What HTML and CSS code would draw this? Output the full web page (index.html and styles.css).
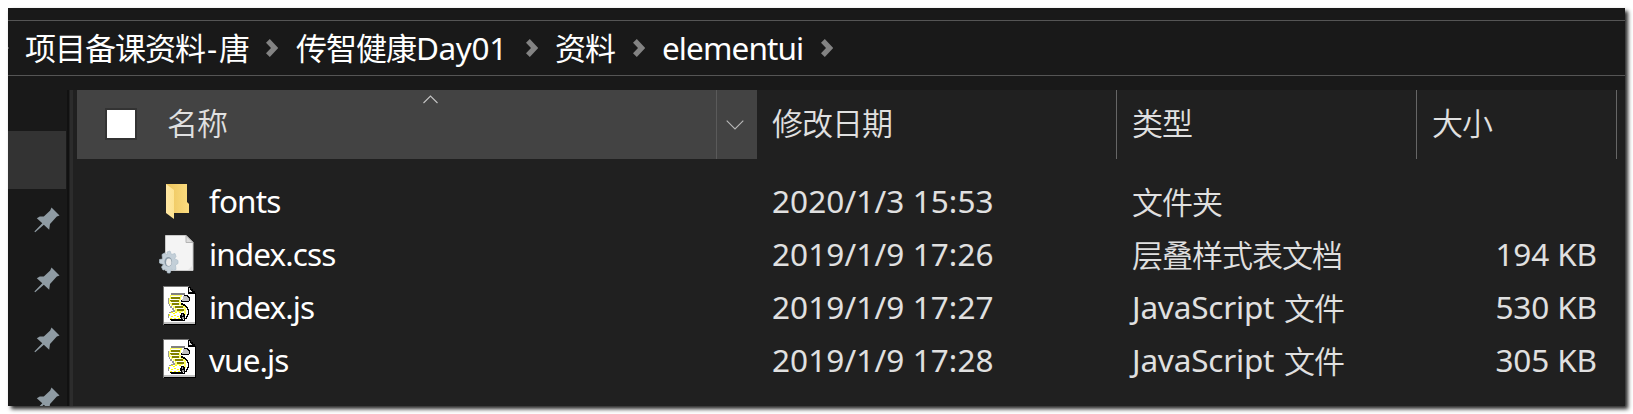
FILE: index.html
```html
<!DOCTYPE html>
<html lang="zh-CN">
<head>
<meta charset="utf-8">
<title>elementui</title>
<link rel="stylesheet" href="styles.css">
</head>
<body>
<svg width="0" height="0" class="defs">
  <symbol id="chev" viewBox="0 0 12 18"><path d="M0 3.8L3.8 0 12.3 9 3.8 18 0 14.2 5 9z" fill="#838383"/></symbol>
  <symbol id="pin" viewBox="0 0 26 26"><path d="M17.5 0.5L25.5 8.5 22.8 9.5 16 17 15.2 22.8 9.8 17.7 1.2 25.3 0.4 24.6 8.3 16.2 2.8 11.2 5.8 9.4 9.8 9.6 16.2 3.6z" fill="#8f9ba3"/></symbol>
  <symbol id="script" viewBox="0 0 33 40">
    <g shape-rendering="crispEdges">
    <path d="M0 0H26V1H28V3H30V5H32V7H33V39H0z" fill="#000"/>
    <path d="M1 1H25V8H32V37H1z" fill="#fff"/>
    <path d="M0 0H26V1H1V39H0z" fill="#777"/>
    <path d="M1 36H32V38H1z" fill="#c0c0c0"/>
    <path d="M25 1H27V3H29V5H31V6H32V8H25z" fill="#000"/>
    <path d="M26 2H27V4H28V5H29V6H26z" fill="#d8d8d8"/>
    <path d="M8 7H22V9H8z" fill="#808080"/>
    <path d="M20 10H25V11H26V12H27V15H26V16H19V13H20z" fill="#c0c0c0"/>
    <path d="M21 9H25V10H26V11H27V15H26V12H25V11H24V10H21zM18 14H19V15H26V16H18z" fill="#000"/>
    <path d="M7 9H19V11H18V14H17V16H18V18H20V19H22V21H23V29H21V25H20V26H12V22H10V20H8V18H6V12H7z" fill="#ff6"/>
    <path d="M8 10H17V11H8zM7 13H16V14H7zM7 16H16V17H7zM10 19H18V20H10zM13 22H21V23H13z" fill="#fff"/>
    <path d="M8 11H17V13H8zM7 14H16V16H8V15H7zM9 17H16V19H9zM12 20H20V22H12zM14 23H21V25H14z" fill="#808000"/>
    <path d="M5 12H6V18H7V20H9V22H11V24H12V26H9V27H7V28H6V32H5V28H6V26H8V25H10V24H9V22H7V20H6V18H5z" fill="#999"/>
    <path d="M18 17H20V18H22V19H23V20H24V21H25V23H26V29H25V31H24V33H22V35H8V34H7V33H18V34H21V32H23V30H24V28H25V24H24V22H23V21H22V20H20V19H18z" fill="#000"/>
    <path d="M6 27H18V33H6z" fill="#fff"/>
    <path d="M8 26H10V27H8zM12 26H14V27H12zM16 26H18V27H16zM6 28H7V30H6zM8 30H10V31H8zM11 29H13V30H11zM14 30H16V31H14zM7 32H9V33H7zM11 32H13V33H11zM15 32H17V33H15zM10 27H12V28H10z" fill="#ff0"/>
    <path d="M18 27H21V28H22V33H20V34H18V32H17V29H18z" fill="#000"/>
    <path d="M19 28H20V30H19zM19 31H21V33H19z" fill="#999"/>
    </g>
  </symbol>
</svg>
<main class="window">
  <div class="topstrip"></div>
  <nav class="crumbs">
    <span class="edge"></span>
    <span class="cjk c1">项目备课资料</span><span class="lat dash">-</span><span class="cjk c2">唐</span>
    <svg class="chev v1"><use href="#chev"/></svg>
    <span class="cjk c3">传智健康</span><span class="lat day">Day01</span>
    <svg class="chev v2"><use href="#chev"/></svg>
    <span class="cjk c4">资料</span>
    <svg class="chev v3"><use href="#chev"/></svg>
    <span class="lat elem">elementui</span>
    <svg class="chev v4"><use href="#chev"/></svg>
  </nav>
  <div class="body">
    <aside class="side">
      <div class="selected"></div>
      <svg class="pin"><use href="#pin"/></svg>
      <svg class="pin"><use href="#pin"/></svg>
      <svg class="pin"><use href="#pin"/></svg>
      <svg class="pin"><use href="#pin"/></svg>
    </aside>
    <div class="splitter"></div>
    <section class="list">
      <header class="head">
        <div class="h name"><span class="check"></span><span class="cjk">名称</span>
          <svg class="sort" viewBox="0 0 16 9"><path d="M0.5 8L7.5 1 14.5 8" fill="none" stroke="#c4c4c4" stroke-width="1.1"/></svg></div>
        <div class="drop"><svg width="18" height="10" viewBox="0 0 18 10"><path d="M0.7 0.7L9 9 17.3 0.7" fill="none" stroke="#b8b8b8" stroke-width="1.1"/></svg></div>
        <div class="h date"><span class="cjk">修改日期</span></div>
        <div class="h type"><span class="cjk">类型</span></div>
        <div class="h size"><span class="cjk">大小</span></div>
      </header>
      <div class="row">
        <div class="icon"><svg class="folder" viewBox="0 0 24 36"><defs><linearGradient id="fg" x2="1"><stop offset="0" stop-color="#ecc45c"/><stop offset="1" stop-color="#fbdc80"/></linearGradient><linearGradient id="ff" x2="1"><stop offset="0" stop-color="#ffe7a3"/><stop offset="1" stop-color="#fde391"/></linearGradient></defs><path d="M0 0H21V18L23 20V29H0z" fill="url(#fg)"/><path d="M0 0L8 6V35L0 29z" fill="url(#ff)"/></svg></div>
        <div class="fname lat">fonts</div>
        <div class="fdate lat">2020/1/3 15:53</div>
        <div class="ftype"><span class="cjk">文件夹</span></div>
        <div class="fsize lat"></div>
      </div>
      <div class="row">
        <div class="icon"><svg class="css" viewBox="0 0 35 39"><path d="M6.5 0.5H27L34 7.5V35.5H6.5z" fill="#f4f4f4" stroke="#c9c9c9"/><path d="M27 0.5V7.5H34z" fill="#dcdcdc" stroke="#b4b4b4"/><path d="M29 35L34 30V35z" fill="#e4e4e4"/><path d="M8 17L11 16 12.5 19.5 16 18.5 17 21.5 15.5 23.5 19 25.5V28.5L16.5 30 17 34.5 14.5 35.5 12.5 34 11 38H8.5L7.5 34.5 4 35 2.5 32 4.5 29.5 0.5 28V24.5L3.5 24 3 19.5 5.5 18 8 20z" fill="#c3cfd8" stroke="#aebdc8" stroke-width="0.7"/><ellipse cx="9.3" cy="26.8" rx="3.8" ry="4.8" fill="#8a9aa7"/><ellipse cx="9.8" cy="27.2" rx="2.7" ry="3.8" fill="#e9eaeb"/></svg></div>
        <div class="fname lat">index.css</div>
        <div class="fdate lat">2019/1/9 17:26</div>
        <div class="ftype"><span class="cjk">层叠样式表文档</span></div>
        <div class="fsize lat">194 KB</div>
      </div>
      <div class="row">
        <div class="icon"><svg class="js"><use href="#script"/></svg></div>
        <div class="fname lat">index.js</div>
        <div class="fdate lat">2019/1/9 17:27</div>
        <div class="ftype"><span class="lat java">JavaScript</span><span class="cjk">文件</span></div>
        <div class="fsize lat">530 KB</div>
      </div>
      <div class="row">
        <div class="icon"><svg class="js"><use href="#script"/></svg></div>
        <div class="fname lat">vue.js</div>
        <div class="fdate lat">2019/1/9 17:28</div>
        <div class="ftype"><span class="lat java">JavaScript</span><span class="cjk">文件</span></div>
        <div class="fsize lat">305 KB</div>
      </div>
    </section>
  </div>
</main>
</body>
</html>
```
FILE: styles.css
```css
* { box-sizing: border-box; }
body { margin: 0; padding: 8px; width: 1633px; height: 414px; background: #fff; overflow: hidden; color: #e0e0e0; }
.defs { position: absolute; }
.window { width: 1617px; height: 398px; background: #191919; box-shadow: 3px 3px 4px rgba(0,0,0,.85); }
.topstrip { height: 12px; }
.cjk { font: 350 31px/40px "Noto Sans CJK SC", sans-serif; letter-spacing: -1px; white-space: nowrap; }
.lat { font: 31.5px/40px "Noto Sans", sans-serif; white-space: nowrap; }

.crumbs { height: 56px; border-top: 1px solid #555; border-bottom: 1px solid #555; display: flex; align-items: center; color: #fff; }
.crumbs .cjk { font-weight: 400; padding-bottom: 2px; }
.edge { width: 1px; height: 2px; background: #555; }
.c1 { width: 182px; margin-left: 16px; }
.dash { width: 12px; }
.c2 { width: 30px; }
.chev { width: 12px; height: 18px; flex: none; margin-bottom: 1px; }
.v1 { margin-left: 17px; }
.c3 { margin-left: 18px; width: 120px; }
.day { width: 87px; letter-spacing: -0.4px; }
.v2 { margin-left: 23px; }
.c4 { margin-left: 17px; width: 60px; }
.v3 { margin-left: 18px; }
.elem { margin-left: 17px; width: 143px; letter-spacing: -0.9px; }
.v4 { margin-left: 16px; }

.body { display: flex; height: 316px; margin-top: 14px; }
.side { width: 59px; overflow: hidden; padding-top: 41px; display: flex; flex-direction: column; }
.selected { width: 58px; height: 58px; background: #333; flex: none; margin-bottom: 18px; }
.pin { width: 26px; height: 26px; flex: none; margin: 0 0 34px 26px; }
.splitter { width: 10px; background: linear-gradient(90deg, #111 0 2px, #202020 2px 3px, #2c2c2c 3px 6px, #202020 6px); }
.list { flex: 1; background: #202020; }
.head { display: flex; height: 69px; margin-bottom: 8px; }
.h { display: flex; align-items: center; padding-bottom: 5px; }
.name { width: 639px; background: #434343; padding-left: 28px; position: relative; }
.check { width: 32px; height: 32px; border: 2px solid #333; background: #fff; margin: 4px 30px 0 0; }
.sort { position: absolute; left: 346px; top: 5px; width: 16px; height: 9px; }
.drop { width: 41px; background: #434343; border-left: 1px solid #5a5a5a; display: flex; justify-content: center; align-items: center; padding-right: 4px; }
.date { width: 360px; padding-left: 15px; border-right: 1px solid #666; }
.type { width: 300px; padding-left: 15px; border-right: 1px solid #666; }
.size { width: 200px; padding-left: 15px; border-right: 1px solid #666; }

.row { height: 53px; display: grid; grid-template-columns: 132px 563px 360px 300px 165px; align-items: start; }
.row > div { padding-top: 14px; }
.row .icon { height: 53px; padding-top: 0; }
.icon svg { display: block; }
.folder { width: 24px; height: 36px; margin: 17px 0 0 89px; }
.css { width: 35px; height: 39px; margin: 15px 0 0 82px; }
.js { width: 33px; height: 40px; margin: 13px 0 0 86px; }
.fname { color: #fff; letter-spacing: -0.9px; }
.fdate { letter-spacing: 0.1px; }
.ftype { display: flex; }
.java { width: 152px; letter-spacing: -0.2px; }
.fsize { text-align: right; letter-spacing: -0.1px; }
```
